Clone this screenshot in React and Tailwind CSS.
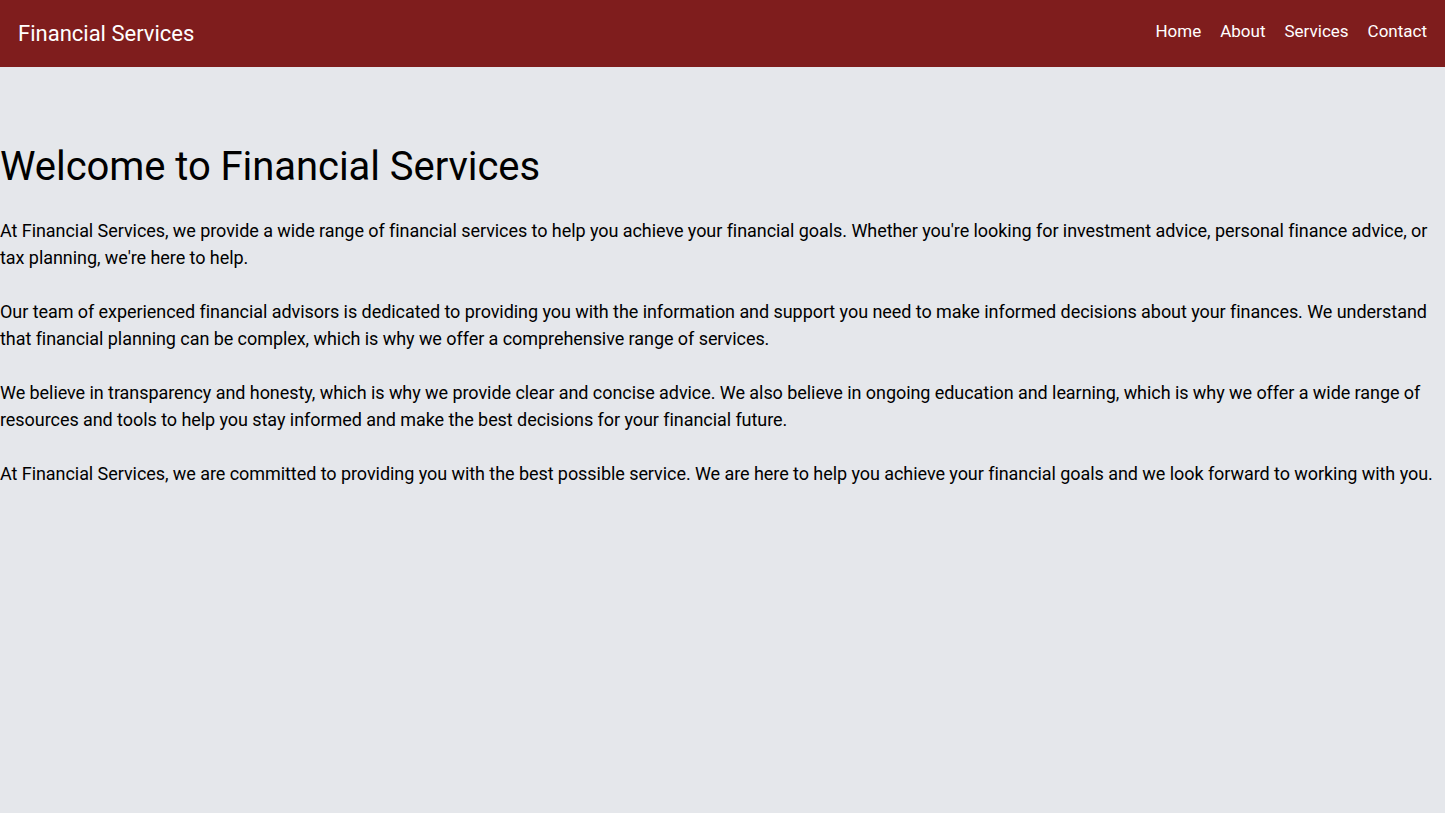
export default function App() {
  return (
    <div className="min-h-screen bg-[#e5e7eb] font-['Roboto',sans-serif] text-black">
      <header className="bg-[#7f1d1d] flex items-center justify-between px-[18px] h-[67px]">
        <div className="text-white text-[22px]">Financial Services</div>
        <nav className="flex gap-[19px] text-white text-[17px] -mt-[3px]">
          <a href="#">Home</a>
          <a href="#">About</a>
          <a href="#">Services</a>
          <a href="#">Contact</a>
        </nav>
      </header>
      <main className="pt-[76px] tracking-[-0.06px]">
        <h1 className="text-[40px] leading-[48px] mb-[26px]">Welcome to Financial Services</h1>
        <p className="text-lg leading-[27px] mb-[27px]">At Financial Services, we provide a wide range of financial services to help you achieve your financial goals. Whether you're looking for investment advice, personal finance advice, or tax planning, we're here to help.</p>
        <p className="text-lg leading-[27px] mb-[27px]">Our team of experienced financial advisors is dedicated to providing you with the information and support you need to make informed decisions about your finances. We understand that financial planning can be complex, which is why we offer a comprehensive range of services.</p>
        <p className="text-lg leading-[27px] mb-[27px]">We believe in transparency and honesty, which is why we provide clear and concise advice. We also believe in ongoing education and learning, which is why we offer a wide range of resources and tools to help you stay informed and make the best decisions for your financial future.</p>
        <p className="text-lg leading-[27px] mb-[27px]">At Financial Services, we are committed to providing you with the best possible service. We are here to help you achieve your financial goals and we look forward to working with you.</p>
      </main>
    </div>
  );
}
